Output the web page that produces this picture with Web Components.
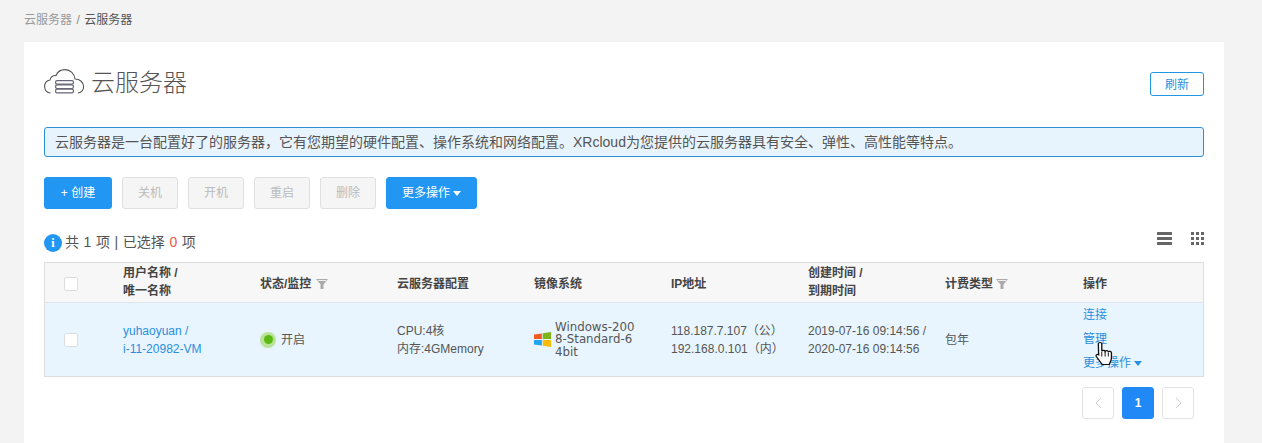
<!DOCTYPE html>
<html lang="zh"><head><meta charset="utf-8"><title>云服务器</title>
<style>
html,body{margin:0;padding:0;background:#f3f3f3;overflow:hidden}
body{font:12px/1.5 "Liberation Sans","Noto Sans CJK SC",sans-serif;color:#555;height:443px}
</style></head><body>
<x-page>
<x-crumbs slot="crumbs"><span>云服务器</span><span class="s">/</span><b>云服务器</b></x-crumbs>
<x-heading></x-heading>
<x-notice>云服务器是一台配置好了的服务器，它有您期望的硬件配置、操作系统和网络配置。XRcloud为您提供的云服务器具有安全、弹性、高性能等特点。</x-notice>
<x-toolbar></x-toolbar>
<x-summary></x-summary>
<x-table></x-table>
<x-pager></x-pager>
</x-page>
<script>
function def(name,html){customElements.define(name,class extends HTMLElement{constructor(){super();this.attachShadow({mode:'open'}).innerHTML=html;}})}
const FONT='"Liberation Sans","Noto Sans CJK SC",sans-serif';
def('x-page',`<style>
:host{display:block;font-family:${FONT}}
.top{padding:12px 24px 0;height:42px;box-sizing:border-box}
.panel{margin:0 38px 0 24px;background:#fff;padding:0 20px;height:401px;box-sizing:border-box;display:flow-root}
</style><div class="top"><slot name="crumbs"></slot></div><div class="panel"><slot></slot></div>`);
def('x-crumbs',`<style>:host{display:flex;font-size:12px;line-height:16px;color:#999;gap:4.4px}
::slotted(b){font-weight:400;color:#555}::slotted(.s){color:#888}</style><slot></slot>`);
def('x-heading',`<style>:host{display:flex;align-items:center;height:36px;margin-top:23px}
svg{width:42px;height:28px;margin-right:5px;display:block}
h1{font-size:24px;line-height:36px;font-weight:300;color:#555;margin:0;flex:1}
button{width:54px;height:24px;box-sizing:border-box;background:#fff;border:1px solid #2196e3;border-radius:3px;color:#2a8fdc;font:12px ${FONT};padding:0;margin-top:1px}
</style>
<svg viewBox="0 0 42 28" fill="none" stroke="#555" stroke-width="1.1">
<path d="M6.500 24C3 24 .6 21 .6 17.600 .6 14 3 11.500 6 11 6.500 8 9 6 12 6.600 13.500 2.500 17 .6 21 .6 26.500 .6 30.500 5 31 10 36 10 39.600 13.500 39.600 17.600 39.600 21 37.500 23.500 34 24"/>
<g stroke="#667" stroke-width="1.200"><rect x="11.600" y="11.600" width="17.800" height="3.600" rx="1.400"/><rect x="11.600" y="15.900" width="17.800" height="3.600" rx="1.400"/><rect x="11.600" y="20.200" width="17.800" height="3.600" rx="1.400"/></g></svg>
<h1>云服务器</h1><button>刷新</button>`);
def('x-notice',`<style>:host{display:block;margin-top:26px;height:30px;box-sizing:border-box;border:1px solid #2b90d9;border-radius:3px;background:#e8f4fd;padding:0 10px;font-size:14px;line-height:28px;color:#555;white-space:nowrap}</style><slot></slot>`);
def('x-toolbar',`<style>:host{display:flex;gap:10px;margin-top:20px;height:32px}
span{box-sizing:border-box;height:32px;width:56px;border-radius:3px;display:flex;align-items:center;justify-content:center;font-size:12px;background:#f5f5f5;border:1px solid #e0e0e0;color:#bbb}
.p{background:#2196f3;border-color:#2196f3;color:#fff}
.a{width:68px}.m{width:91px;gap:3px}
i{border:4.5px solid transparent;border-top:5px solid #fff;border-bottom:0;width:0;height:0}
</style><span class="p a">+ 创建</span><span>关机</span><span>开机</span><span>重启</span><span>删除</span><span class="p m">更多操作<i></i></span>`);
def('x-summary',`<style>:host{display:flex;align-items:center;height:25px;margin-top:21px;position:relative;font-size:14px;color:#555;white-space:pre;word-spacing:.7px}
.i{width:18px;height:18px;border-radius:50%;background:#2196f3;color:#fff;font:700 12px/19px "Liberation Serif",serif;text-align:center;margin-right:3px}
em{font-style:normal;color:#f0594a}
.tools{margin-left:auto;display:flex;gap:19px;align-items:center;margin-top:-9px}
svg{display:block}
</style><span class="i">i</span><span>共 1 项 | 已选择 <em>0</em> 项</span>
<div class="tools"><svg width="15" height="13" fill="#666"><rect width="15" height="3" y="0" rx=".5"/><rect width="15" height="3" y="5" rx=".5"/><rect width="15" height="3" y="10" rx=".5"/></svg>
<svg width="13" height="13" fill="#666"><rect width="3" height="3"/><rect x="5" width="3" height="3"/><rect x="10" width="3" height="3"/><rect y="5" width="3" height="3"/><rect x="5" y="5" width="3" height="3"/><rect x="10" y="5" width="3" height="3"/><rect y="10" width="3" height="3"/><rect x="5" y="10" width="3" height="3"/><rect x="10" y="10" width="3" height="3"/></svg></div>`);
const funnel=`<svg class="f" width="12" height="12" viewBox="0 0 12 12"><path d="M0 1h12L7.500 6.500V11h-3V6.500z" fill="#aaa"/><path d="M2 2.500h8" stroke="#eee" stroke-width="1"/></svg>`;
def('x-table',`<style>
:host{display:block;margin-top:7px;border:1px solid #ddd;box-sizing:border-box;width:1160px;height:115px;font-size:12px;line-height:18px;color:#555}
.r{display:grid;grid-template-columns:78px repeat(7,137px) 1fr;align-items:center}
.h{height:39px;background:#f7f7f7;border-bottom:1px solid #dde6ee;font-weight:700;color:#444}
.b{height:73px;background:#e8f5fe}
.c{display:block;box-sizing:border-box;width:14px;height:14px;border:1px solid #ddd;border-radius:2px;background:#fff;margin-left:19px}
a{color:#2a8fdc;text-decoration:none;display:block}
.h>div{display:flex;flex-direction:column;margin-top:2px}.h .two{margin-top:-2px}.h .x{flex-direction:row;align-items:center;gap:3px}.h .w{gap:5px}
.st{display:flex;align-items:center;gap:5px}
.dot{width:16px;height:16px;border-radius:50%;background:#b9e39a;display:flex;align-items:center;justify-content:center}
.dot::after{content:"";width:9px;height:9px;border-radius:50%;background:#5cb812}
.os{display:flex;align-items:center;gap:4px;width:108px}
.os span{font:11.800px/12.500px "DejaVu Sans",sans-serif;color:#555;word-break:break-all;width:84px}
.ops{display:flex;flex-direction:column;gap:6px;position:relative;margin-top:-1px}
.ops i{display:inline-block;border:4.500px solid transparent;border-top:5px solid #2a8fdc;border-bottom:0;margin-left:3px;vertical-align:1px}
.cur{position:absolute;left:12px;top:35px}
.ml{margin-left:1px}
</style>
<div class="r h"><div><span class="c"></span></div><div class="two"><span>用户名称 /</span><span>唯一名称</span></div><div class="x w">状态/监控${funnel}</div><div>云服务器配置</div><div>镜像系统</div><div>IP地址</div><div class="two"><span>创建时间 /</span><span>到期时间</span></div><div class="x">计费类型${funnel}</div><div class="ml">操作</div></div>
<div class="r b"><div><span class="c"></span></div><div><a>yuhaoyuan /</a><a>i-11-20982-VM</a></div><div class="st"><span class="dot"></span><span>开启</span></div><div>CPU:4核<br>内存:4GMemory</div>
<div class="os"><svg width="17" height="15" viewBox="0 0 16 14" style="flex:none"><path d="M0 2.400 7.400 1.400V6.600H0z" fill="#f25a24"/><path d="M8.200 1.200 16 0V6.600H8.200z" fill="#7cb518"/><path d="M0 7.400H7.400V12.600L0 11.600z" fill="#1ea5ee"/><path d="M8.200 7.400H16V14L8.200 12.800z" fill="#fbbc09"/></svg><span>Windows-2008-Standard-64bit</span></div>
<div>118.187.7.107（公）<br>192.168.0.101（内）</div><div>2019-07-16 09:14:56 /<br>2020-07-16 09:14:56</div><div>包年</div>
<div class="ops ml"><a>连接</a><a>管理</a><a>更多操作<i></i></a>
<svg class="cur" width="20" height="25" viewBox="0 0 18 25" preserveAspectRatio="none"><path d="M4.500 1.500c1 0 1.600.7 1.600 1.600v7c.3-1 2.600-1.200 3 .2.4-1 2.500-1 2.900.4.7-.7 2.700-.4 2.800 1.200V17c0 2.500-1.200 4-2 6.500H6.500L1.200 15.500c-.8-1.500.8-2.800 2.100-1.700l-.3-10.700c0-.9.500-1.600 1.500-1.600z" fill="#fff" stroke="#111" stroke-width="1.200"/><path d="M6.100 10.500v5M9.100 10.500v5M12 11.500v4" stroke="#111" stroke-width=".9"/></svg></div></div>`);
def('x-pager',`<style>:host{display:flex;justify-content:flex-end;gap:8px;margin-top:10px;padding-right:10px}
span{box-sizing:border-box;width:32px;height:32px;border:1px solid #e3e3e3;border-radius:3px;display:flex;align-items:center;justify-content:center;background:#fff}
.on{background:#2189f5;border-color:#2189f5;color:#fff;font:700 12px ${FONT}}
</style><span><svg width="7" height="12" fill="none" stroke="#ccc"><path d="M6 1 1 6l5 5"/></svg></span><span class="on">1</span><span><svg width="7" height="12" fill="none" stroke="#ccc"><path d="m1 1 5 5-5 5"/></svg></span>`);
</script>
</body></html>
